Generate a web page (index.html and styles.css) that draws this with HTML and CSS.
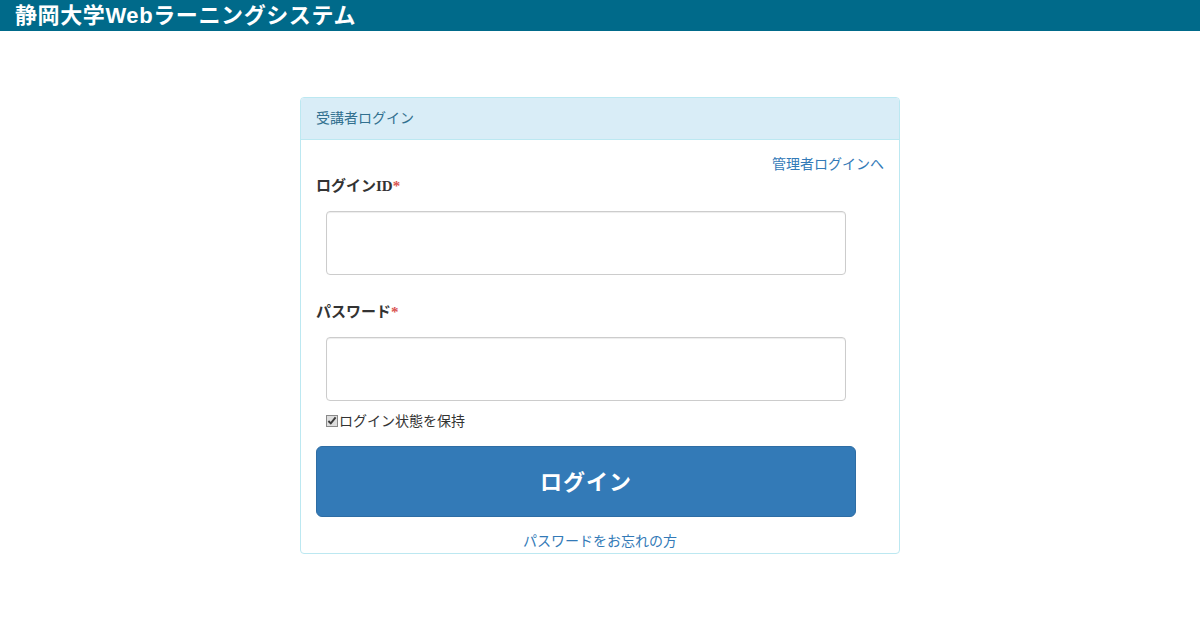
FILE: index.html
```html
<!DOCTYPE html>
<html lang="ja">
<head>
<meta charset="utf-8">
<title>静岡大学Webラーニングシステム</title>
<link rel="stylesheet" href="styles.css">
</head>
<body>
<header class="topbar">
  <h1 class="site-title">静岡大学Webラーニングシステム</h1>
</header>
<main class="main">
  <section class="panel">
    <div class="panel-heading">受講者ログイン</div>
    <div class="panel-body">
      <div class="admin-link-row"><a class="link" href="#">管理者ログインへ</a></div>
      <label class="field-label">ログインID<span class="req">*</span></label>
      <div class="input-wrap"><input class="text-input" type="text"></div>
      <label class="field-label">パスワード<span class="req">*</span></label>
      <div class="input-wrap"><input class="text-input" type="password"></div>
      <label class="remember"><input type="checkbox" checked class="check">ログイン状態を保持</label>
      <button class="btn-login" type="button">ログイン</button>
      <div class="forgot-row"><a class="link" href="#">パスワードをお忘れの方</a></div>
    </div>
  </section>
</main>
</body>
</html>
```

FILE: styles.css
```css
* { box-sizing: border-box; }
html, body { margin: 0; padding: 0; background: #fff; }
body {
  font-family: "Liberation Sans", "Noto Sans CJK JP", sans-serif;
  font-size: 14px;
  color: #333;
  width: 1200px;
  height: 630px;
  overflow: hidden;
}
.topbar {
  height: 31px;
  background: #006a8a;
  padding-left: 15px;
}
.site-title {
  margin: 0;
  color: #fff;
  font-size: 22px;
  font-weight: bold;
  line-height: 31px;
  letter-spacing: 0.6px;
}
.main {
  display: flex;
  justify-content: center;
  padding-top: 66px;
}
.panel {
  width: 600px;
  border: 1px solid #bce8f1;
  border-radius: 4px;
  overflow: hidden;
}
.panel-heading {
  background: #d9edf7;
  color: #31708f;
  border-bottom: 1px solid #bce8f1;
  height: 42px;
  padding: 0 15px;
  line-height: 40px;
  font-size: 14px;
}
.panel-body {
  padding: 14px 15px 1px;
  display: flex;
  flex-direction: column;
}
.admin-link-row {
  text-align: right;
  line-height: 20px;
}
.link {
  color: #337ab7;
  text-decoration: none;
}
.field-label {
  font-family: "Liberation Serif", "Noto Sans CJK JP", serif;
  font-weight: bold;
  font-size: 15px;
  line-height: 20px;
  margin-top: 2px;
  color: #333;
}
.req { color: #d9534f; }
.input-wrap {
  padding: 15px 10px 25px;
}
.text-input {
  display: block;
  width: 520px;
  height: 64px;
  border: 1px solid #ccc;
  border-radius: 4px;
  box-shadow: inset 0 1px 1px rgba(0,0,0,0.075);
  background: #fff;
  font-size: 16px;
  padding: 6px 12px;
}
.input-wrap + .remember { margin-top: -15px; }
.remember {
  display: flex;
  align-items: center;
  padding-left: 10px;
  font-size: 14px;
  line-height: 20px;
  color: #333;
}
.check {
  margin: 0 1px 0 0;
  width: 12px;
  height: 12px;
  accent-color: #dedede;
  outline: 1px solid #8a8a8a;
  outline-offset: -1px;
  border-radius: 2px;
}
.btn-login {
  margin-top: 15px;
  width: 540px;
  height: 71px;
  padding: 0 0 4px;
  background: #337ab7;
  border: 1px solid #2e6da4;
  border-radius: 6px;
  color: #fff;
  font-family: "Liberation Sans", "Noto Sans CJK JP", sans-serif;
  font-size: 22px;
  font-weight: bold;
  letter-spacing: 1px;
}
.forgot-row {
  text-align: center;
  line-height: 20px;
  padding: 14px 0 1px;
}
```
